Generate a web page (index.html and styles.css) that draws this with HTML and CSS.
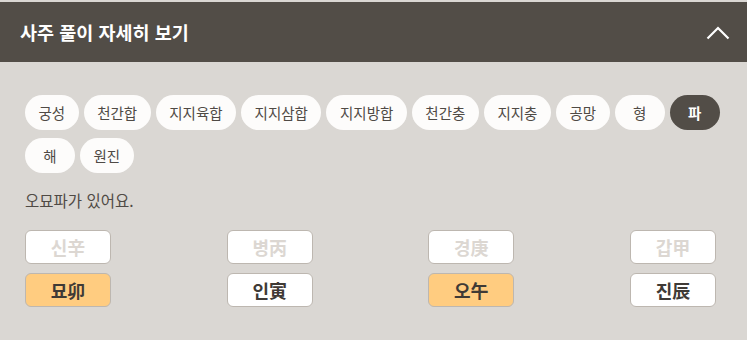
FILE: index.html
```html
<!DOCTYPE html>
<html lang="ko">
<head>
    <meta charset="UTF-8">
    <meta name="viewport" content="width=device-width, initial-scale=1.0">
    <title>사주 풀이 자세히 보기</title>
    <link rel="stylesheet" href="styles.css">
</head>
<body>

    <div class="panel">
        <div class="panel-header">
            <h2>사주 풀이 자세히 보기</h2>
            <svg class="chevron" width="24" height="14" viewBox="0 0 24 14">
                <path d="M1.5 12.5 L12 2 L22.5 12.5" fill="none" stroke="#ffffff" stroke-width="2.2"/>
            </svg>
        </div>

        <div class="panel-body">
            <!-- 관계 종류 탭 -->
            <div class="chips">
                <span class="chip">궁성</span>
                <span class="chip">천간합</span>
                <span class="chip">지지육합</span>
                <span class="chip">지지삼합</span>
                <span class="chip">지지방합</span>
                <span class="chip">천간충</span>
                <span class="chip">지지충</span>
                <span class="chip">공망</span>
                <span class="chip">형</span>
                <span class="chip active">파</span>
                <span class="chip">해</span>
                <span class="chip">원진</span>
            </div>

            <p class="desc">오묘파가 있어요.</p>

            <!-- 사주 팔자 -->
            <div class="pillars">
                <div class="cell faded">신辛</div>
                <div class="cell faded">병丙</div>
                <div class="cell faded">경庚</div>
                <div class="cell faded">갑甲</div>
                <div class="cell hit">묘卯</div>
                <div class="cell">인寅</div>
                <div class="cell hit">오午</div>
                <div class="cell">진辰</div>
            </div>
        </div>
    </div>

</body>
</html>
```

FILE: styles.css
```css
:root {
    --dark: #524d47;
    --bg: #dad7d3;
    --chip-bg: #fdfcfb;
    --text: #4a4540;
    --border: #bdb7b0;
    --orange: #ffcc80;
    --faded: #dcd7d2;
}

body {
    margin: 0;
    padding: 2px 0 0;
    background: var(--bg);
    font-family: "Noto Sans CJK KR", "Noto Sans", sans-serif;
    color: var(--text);
}

.panel-header {
    height: 60px;
    background: var(--dark);
    display: flex;
    align-items: center;
    justify-content: space-between;
    padding: 0 17px 0 20px;
}

.panel-header h2 {
    margin: 0;
    color: white;
    font-size: 18.5px;
    font-weight: 700;
}

.chevron {
    display: block;
    margin-top: 1px;
}

.panel-body {
    padding: 33px 25px 30px;
}

.chips {
    display: flex;
    flex-wrap: wrap;
    gap: 8px 5px;
}

.chip {
    display: flex;
    align-items: center;
    justify-content: center;
    height: 35px;
    min-width: 50px;
    padding: 0 13.5px;
    box-sizing: border-box;
    border-radius: 18px;
    background: var(--chip-bg);
    font-size: 14.5px;
    color: #4f4a45;
}

.chip.active {
    background: var(--dark);
    color: white;
    font-weight: 700;
}

.desc {
    margin: 16px 0 19px;
    font-size: 15.5px;
    color: #4f4a45;
}

.pillars {
    display: grid;
    grid-template-columns: repeat(4, 86px);
    justify-content: space-between;
    row-gap: 9px;
    width: 691px;
}

.cell {
    height: 34px;
    box-sizing: border-box;
    border: 1px solid var(--border);
    border-radius: 6px;
    background: white;
    display: flex;
    align-items: center;
    justify-content: center;
    font-size: 18px;
    font-weight: 700;
    color: #3f3a36;
}

.cell.faded {
    color: var(--faded);
}

.cell.hit {
    background: var(--orange);
}
```
